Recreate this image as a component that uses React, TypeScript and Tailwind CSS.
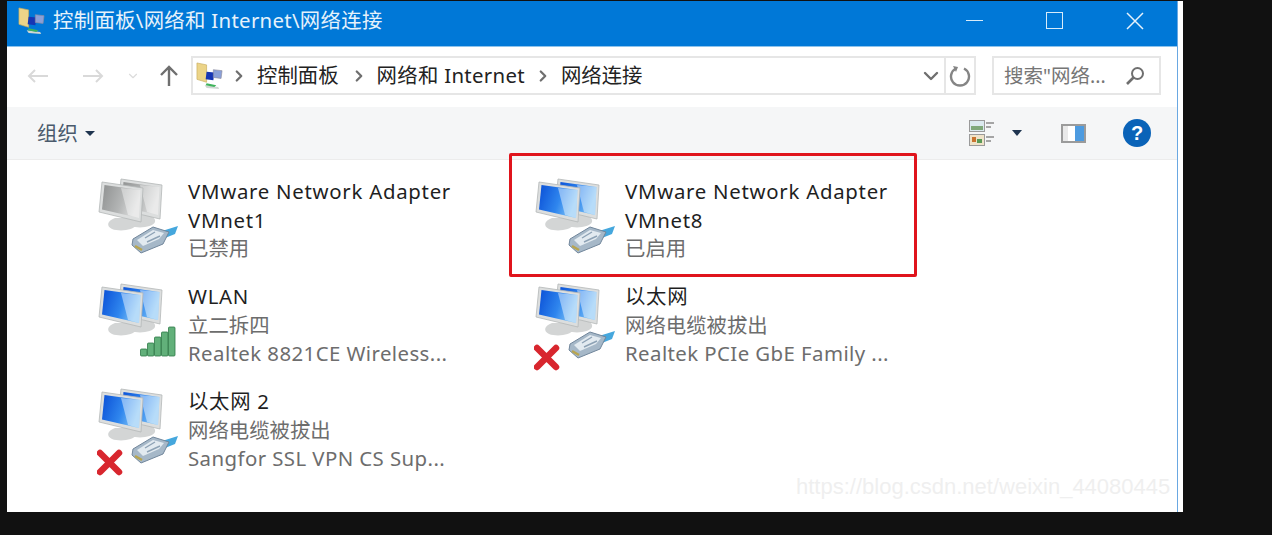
import { ChevronDown, ChevronRight } from "lucide-react";

const fontStack = "font-['Noto_Sans','Noto_Sans_CJK_SC',sans-serif]";

type Adapter = {
  id: string;
  lines: string[];
  status: string[];
  badge: "cable" | "signal";
  off?: boolean;
  unplugged?: boolean;
};

const adapters: Adapter[] = [
  { id: "a", lines: ["VMware Network Adapter", "VMnet1"], status: ["已禁用"], badge: "cable", off: true },
  { id: "b", lines: ["VMware Network Adapter", "VMnet8"], status: ["已启用"], badge: "cable" },
  { id: "c", lines: ["WLAN"], status: ["立二拆四", "Realtek 8821CE Wireless..."], badge: "signal" },
  { id: "d", lines: ["以太网"], status: ["网络电缆被拔出", "Realtek PCIe GbE Family ..."], badge: "cable", unplugged: true },
  { id: "e", lines: ["以太网 2"], status: ["网络电缆被拔出", "Sangfor SSL VPN CS Sup..."], badge: "cable", unplugged: true },
];

const Monitor = ({ x, y, off, id }: { x: number; y: number; off?: boolean; id: string }) => (
  <g transform={`translate(${x} ${y})`}>
    <path d="M16 36 C8 39 7 44 13 47 C21 50 35 48 37 43 C38 39 33 37 30 36 Z" fill="#d3d5d5" />
    <path d="M3 0 L44 6 L42 40 L0 30 Z" fill="#dcdede" stroke="#b4b7b7" strokeWidth="0.8" />
    <path d="M5.5 3 L41.5 8 L40 36 L3 27.5 Z" fill={`url(#${id})`} />
    <path d="M22 6 L41.5 8 L40 36 L29 33 Z" fill="#ffffff" opacity={off ? 0.4 : 0.45} />
  </g>
);

const NetIcon = ({ adapter }: { adapter: Adapter }) => {
  const gid = `screen-${adapter.id}`;
  return (
    <svg width="84" height="88" viewBox="0 0 84 88" className="shrink-0 blur-[0.4px]">
      <defs>
        <linearGradient id={gid} x1="0" y1="0" x2="1" y2="0.3">
          <stop offset="0" stopColor={adapter.off ? "#8f9191" : "#0a4fd6"} />
          <stop offset="0.6" stopColor={adapter.off ? "#b4b6b6" : "#2f86ee"} />
          <stop offset="1" stopColor={adapter.off ? "#dcdddd" : "#7cc0f5"} />
        </linearGradient>
      </defs>
      <Monitor x={21} y={1} off={adapter.off} id={gid} />
      <Monitor x={2} y={4} off={adapter.off} id={gid} />
      {adapter.badge === "cable" && (
        <g>
          <path d="M65 53 L81 48 L78 56 L68 60 Z" fill="#45a7dd" />
          <path d="M35 67 L44 75 L66 66 L72 54 L56 49 L36 61 Z" fill="#a6b8c8" stroke="#71869b" strokeWidth="1" />
          <path d="M40 62 L56 52 L67 55 L62 61 L46 68 Z" fill="#e2eaf0" />
          <path d="M38 68 L45 72" stroke="#b8a550" strokeWidth="2.4" />
          <path d="M50 64 L63 58 M48 60 L58 54" stroke="#8da2b5" strokeWidth="1.4" />
        </g>
      )}
      {adapter.badge === "signal" && (
        <g fill="#62b07a" stroke="#2f7a48" strokeWidth="0.8">
          <rect x="43.5" y="66" width="6.5" height="7" rx="1" />
          <rect x="50.5" y="60" width="6.5" height="13" rx="1" />
          <rect x="57.5" y="54" width="6.5" height="19" rx="1" />
          <rect x="64.5" y="49" width="6.5" height="24" rx="1" />
          <rect x="71.5" y="44" width="6.5" height="29" rx="1" />
        </g>
      )}
      {adapter.unplugged && (
        <path d="M3 65 L22 84 M22 65 L3 84" stroke="#d8262e" strokeWidth="6.5" strokeLinecap="round" />
      )}
    </svg>
  );
};

const AdapterItem = ({ adapter }: { adapter: Adapter }) => (
  <div className="flex h-[105px] w-[437px] gap-[7px]">
    <NetIcon adapter={adapter} />
    <div className="-mt-[1px] text-[20.4px] leading-[28.5px]">
      {adapter.lines.map((line) => (
        <div key={line} className="whitespace-nowrap tracking-[0.72px] text-[#1f1f1f]">{line}</div>
      ))}
      {adapter.status.map((line, i) => (
        <div key={line} className={i === 1 ? "whitespace-nowrap tracking-[0.42px] text-[#6d6d6d]" : "whitespace-nowrap text-[#6d6d6d]"}>
          {line}
        </div>
      ))}
    </div>
  </div>
);

const FolderIcon = ({ size }: { size: number }) => (
  <svg width={size} height={size} viewBox="0 0 28 28" className="shrink-0 blur-[0.3px]">
    <path d="M1 1 L11 3 L11 21 L1 18 Z" fill="#ecd488" stroke="#c9ad5e" strokeWidth="0.7" />
    <path d="M11 10 L19 11 L18 19 L10 18 Z" fill="#1636b4" />
    <path d="M18 8 L27 9 L26 17 L18 16 Z" fill="#8aa0d8" stroke="#8c8ca0" strokeWidth="0.7" />
    <path d="M9 24 L23 26 L24 28 L11 27 Z" fill="#cfd6d2" />
    <path d="M11 22 L21 24 L19 26 L10 24 Z" fill="#3fb35c" />
  </svg>
);

export default function App() {
  return (
    <div className={`h-[535px] w-[1272px] overflow-hidden bg-[#111111] pt-[1px] pl-[7px] ${fontStack}`}>
      <div className="relative h-[511px] w-[1171px] border-r-[1px] border-r-[#6aa8e2] bg-white shadow-[5px_0_0_#ffffff]">
        {/* title bar */}
        <div className="flex h-[45px] items-center bg-[#0078d7] pb-[6px] pl-[11px] text-white">
          <FolderIcon size={27} />
          <span className="ml-[8px] text-[20.4px] tracking-[0.3px] text-[#e6f2fb]">控制面板\网络和 Internet\网络连接</span>
          <div className="ml-auto flex items-center">
            <div className="h-[1.5px] w-[17px] bg-[#d9ecf9]" />
            <div className="ml-[63px] h-[17px] w-[17px] border-[1.5px] border-[#d9ecf9]" />
            <svg width="18" height="18" viewBox="0 0 18 18" className="mr-[33px] ml-[63px]">
              <path d="M1 1 L17 17 M17 1 L1 17" stroke="#e6f2fb" strokeWidth="1.5" />
            </svg>
          </div>
        </div>

        {/* address row */}
        <div className="flex h-[61px] items-center border-t border-t-[#8dc3ec] pb-[3px] pl-[20px]">
          <svg width="22" height="16" viewBox="0 0 22 16" className="shrink-0">
            <path d="M21 8 H2 M8 2 L2 8 L8 14" fill="none" stroke="#d9d9d9" strokeWidth="2" />
          </svg>
          <svg width="22" height="16" viewBox="0 0 22 16" className="ml-[33px] shrink-0">
            <path d="M1 8 H20 M14 2 L20 8 L14 14" fill="none" stroke="#d9d9d9" strokeWidth="2" />
          </svg>
          <ChevronDown size={14} strokeWidth={2} className="ml-[22px] text-[#dcdcdc]" />
          <svg width="20" height="22" viewBox="0 0 20 22" className="ml-[19px] shrink-0">
            <path d="M10 21 V3 M2 10 L10 2 L18 10" fill="none" stroke="#6f6f6f" strokeWidth="2.4" />
          </svg>
          <div className="ml-[12px] flex h-[39px] w-[785px] items-center border-2 border-[#e6e6e6] pl-[3px] text-[20.4px] text-[#222222]">
            <FolderIcon size={27} />
            <ChevronRight size={18} strokeWidth={3} className="ml-[7px] text-[#6f6f6f]" />
            <span className="ml-[9px]">控制面板</span>
            <ChevronRight size={18} strokeWidth={3} className="ml-[11px] text-[#6f6f6f]" />
            <span className="ml-[9px] tracking-[0.3px] whitespace-nowrap">网络和 Internet</span>
            <ChevronRight size={18} strokeWidth={3} className="ml-[9px] text-[#6f6f6f]" />
            <span className="ml-[9px]">网络连接</span>
            <ChevronDown size={24} strokeWidth={2.4} className="ml-auto text-[#6f6f6f]" />
            <div className="ml-[1px] flex h-full w-[30px] items-center justify-center border-l-2 border-l-[#e6e6e6]">
              <svg width="22" height="22" viewBox="0 0 22 22">
                <path d="M7 3.5 A9 9 0 1 0 15 3.5" fill="none" stroke="#858585" strokeWidth="2.4" />
                <path d="M4 1 L9 2 L7 7 Z" fill="#858585" />
              </svg>
            </div>
          </div>
          <div className="ml-[16px] flex h-[39px] w-[169px] items-center border-2 border-[#e6e6e6] pl-[10px] text-[19.5px] text-[#767676]">
            <span className="whitespace-nowrap">搜索"网络...</span>
            <svg width="20" height="20" viewBox="0 0 20 20" className="mr-[14px] ml-auto">
              <circle cx="12.5" cy="7.5" r="5.5" fill="none" stroke="#6f6f6f" strokeWidth="2" />
              <path d="M8.5 11.5 L2 18" stroke="#6f6f6f" strokeWidth="2.6" />
            </svg>
          </div>
        </div>

        {/* toolbar */}
        <div className="flex h-[53px] items-center border-b border-b-[#ececec] bg-[#f5f6f7] pl-[30px]">
          <span className="text-[20.4px] text-[#4a5a6c]">组织</span>
          <div className="ml-[7px] h-0 w-0 border-x-[5px] border-t-[5px] border-x-transparent border-t-[#1f3550]" />
          <svg width="25" height="27" viewBox="0 0 25 27" className="ml-auto shrink-0">
            <rect x="0.5" y="0.5" width="15" height="11" fill="#dbe9ee" stroke="#9a9a9a" />
            <rect x="2" y="6" width="12" height="4" fill="#7fa87a" />
            <rect x="0.5" y="14.5" width="15" height="11" fill="#efe3c9" stroke="#9a9a9a" />
            <rect x="3" y="17" width="4" height="5" fill="#c9742f" />
            <rect x="8" y="19" width="5" height="4" fill="#5b9a56" />
            <path d="M17 3 H25 M17 7 H22 M17 17 H25 M17 21 H22" stroke="#8a8a8a" strokeWidth="1.4" />
          </svg>
          <div className="ml-[18px] h-0 w-0 border-x-[5.5px] border-t-[6px] border-x-transparent border-t-[#1f3550]" />
          <div className="ml-[39px] flex h-[19px] w-[25px] border-2 border-[#9b9b9b]">
            <div className="w-[5px] bg-[#e9e9e9]" />
            <div className="w-[7px] bg-white" />
            <div className="flex-1 bg-[#4d9be0]" />
          </div>
          <div className="mr-[26px] ml-[37px] flex h-[28px] w-[28px] items-center justify-center rounded-full bg-[#0a63b8] font-['Liberation_Sans',sans-serif] text-[20px] font-bold text-white">
            ?
          </div>
        </div>

        {/* connections list */}
        <div className="grid grid-cols-[437px_437px] pt-[18px] pl-[90px]">
          {adapters.map((adapter) => (
            <AdapterItem key={adapter.id} adapter={adapter} />
          ))}
        </div>

        {/* annotations */}
        <div className="absolute top-[152px] left-[502px] h-[124px] w-[408px] rounded-[2px] border-[3px] border-[#e0141c]" />
        <div className="absolute top-[473px] left-[789px] font-['Liberation_Sans',sans-serif] text-[22px] leading-[26px] text-[#efefef]">
          https://blog.csdn.net/weixin_44080445
        </div>
      </div>
    </div>
  );
}
